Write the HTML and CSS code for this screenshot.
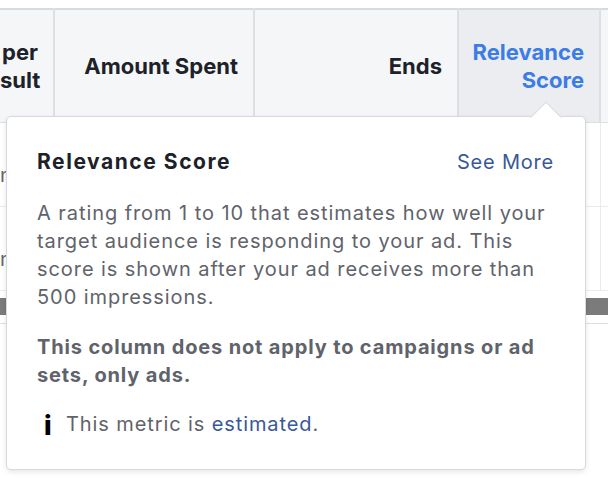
FILE: index.html
```html
<!DOCTYPE html>
<html lang="en">
<head>
<meta charset="utf-8">
<title>Ads Manager – columns</title>
<link rel="stylesheet" href="styles.css">
</head>
<body>
<div class="stage">
  <table class="grid">
    <colgroup>
      <col class="c1"><col class="c2"><col class="c3"><col class="c4"><col class="c5">
    </colgroup>
    <thead>
      <tr>
        <th class="clip">per<br>sult</th>
        <th>Amount Spent</th>
        <th>Ends</th>
        <th class="active">Relevance<br>Score</th>
        <th class="edge"></th>
      </tr>
    </thead>
    <tbody>
      <tr class="row"><td class="clip cell-text">n</td><td></td><td></td><td></td><td class="edge"></td></tr>
      <tr class="row"><td class="clip cell-text">n</td><td></td><td></td><td></td><td class="edge"></td></tr>
    </tbody>
  </table>
  <div class="scrollbar"><div class="thumb"></div></div>

  <div class="popover">
    <div class="popover-head">
      <h2 class="popover-title">Relevance Score</h2>
      <a class="link see-more" href="#">See More</a>
    </div>
    <p class="popover-text">A rating from 1 to 10 that estimates how well your target audience is responding to your ad. This score is shown after your ad receives more than 500 impressions.</p>
    <p class="popover-note">This column does not apply to campaigns or ad sets, only ads.</p>
    <div class="popover-info">
      <span class="info-icon">i</span>
      <span>This metric is <a class="link" href="#">estimated</a>.</span>
    </div>
  </div>
</div>
</body>
</html>
```

FILE: styles.css
```css
* { box-sizing: border-box; }

html, body {
  margin: 0;
  background: #fff;
  font-family: Inter, "Noto Sans", sans-serif;
}

.stage {
  position: relative;
  width: 608px;
  height: 478px;
  overflow: hidden;
  padding-top: 8px;
}

/* ---- table ---- */
.grid {
  border-collapse: collapse;
  table-layout: fixed;
  width: 618px;
  border-top: 2px solid #d8dadd;
}
.c1 { width: 54px; }
.c2 { width: 200px; }
.c3 { width: 204px; }
.c4 { width: 142px; }
.c5 { width: 18px; }

.grid th {
  height: 113px;
  background: #f5f6f7;
  border-right: 2px solid #dddfe2;
  border-bottom: 1px solid #dddfe2;
  padding: 0 15px 0 0;
  text-align: right;
  vertical-align: middle;
  font-size: 22px;
  line-height: 28px;
  font-weight: 700;
  color: #1d2129;
  white-space: nowrap;
}
.grid th.active {
  background: #ebedf0;
  color: #3b7ce8;
}
.grid th.clip, .grid td.clip { overflow: hidden; }

.grid td {
  border-right: 1px solid #e9ebee;
  border-bottom: 1px solid #e9ebee;
  padding: 0;
}
.row td { height: 84px; }
.grid td.cell-text {
  text-align: right;
  padding: 22px 48px 0 0;
  font-size: 20px;
  color: #606770;
}

.scrollbar {
  margin-top: 7px;
  height: 26px;
  border-bottom: 1px solid #dddfe2;
}
.thumb {
  height: 17px;
  background: #7b7b7b;
}

/* ---- popover ---- */
.popover {
  position: absolute;
  left: 6px;
  top: 116px;
  width: 580px;
  height: 354px;
  background: #fff;
  border: 1px solid #d6d9de;
  border-radius: 5px;
  box-shadow: 0 2px 5px rgba(0, 0, 0, 0.1);
  padding: 31px 31px 0 30px;
}
.popover::before {
  content: "";
  position: absolute;
  left: 528px;
  top: -11px;
  width: 21px;
  height: 21px;
  background: #fff;
  border-left: 1px solid #d6d9de;
  border-top: 1px solid #d6d9de;
  transform: rotate(45deg);
}

.popover-head {
  display: flex;
  justify-content: space-between;
  align-items: center;
  height: 28px;
}
.popover-title {
  margin: 0;
  font-size: 21px;
  line-height: 28px;
  font-weight: 700;
  letter-spacing: 1.55px;
  color: #1d2129;
}
.link {
  color: #385898;
  text-decoration: none;
}
.see-more {
  font-size: 20px;
  line-height: 28px;
  letter-spacing: 0.8px;
}

.popover-text,
.popover-note {
  margin: 23px 0 0;
  font-size: 20px;
  line-height: 28px;
  letter-spacing: 0.93px;
  color: #5f636b;
}
.popover-note {
  margin-top: 22px;
  font-weight: 700;
  letter-spacing: 0.85px;
}

.popover-info {
  display: flex;
  align-items: center;
  margin-top: 21px;
  height: 28px;
  font-size: 20px;
  letter-spacing: 0.9px;
  color: #5f636b;
}
.info-icon {
  width: 29px;
  padding-left: 7px;
  padding-top: 3px;
  font-size: 27px;
  font-weight: 800;
  color: #000;
  line-height: 28px;
  letter-spacing: 0;
}
```
